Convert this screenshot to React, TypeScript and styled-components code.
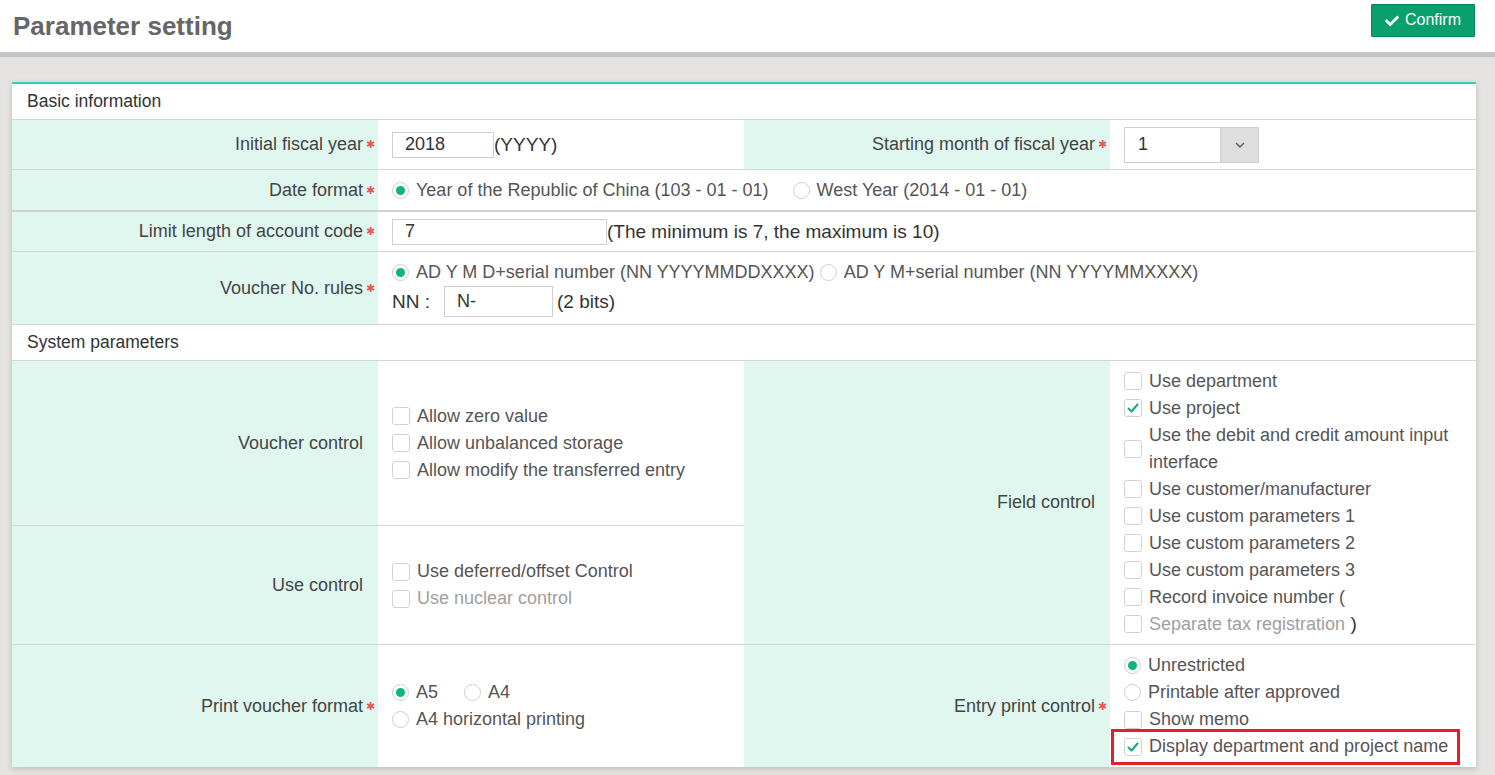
import React from 'react';
import styled, { createGlobalStyle, css } from 'styled-components';
import { FaCheck } from 'react-icons/fa';

const GlobalStyle = createGlobalStyle`
  html, body { margin: 0; padding: 0; background: #e4e3e2; }
  body {
    font-family: "Liberation Sans", Arial, sans-serif;
    width: 1495px; height: 775px; overflow: hidden;
  }
  * { box-sizing: border-box; }
`;

const Page = styled.div`
  display: flex;
  flex-direction: column;
  height: 775px;
`;

const Header = styled.header`
  height: 57px;
  background: #fff;
  border-bottom: 5px solid #c4c4c4;
  display: flex;
  align-items: flex-start;
  justify-content: space-between;
  padding: 0 20px 0 13px;
`;

const Title = styled.h1`
  margin: 0;
  font-size: 26px;
  line-height: 52px;
  font-weight: bold;
  color: #666;
`;

const ConfirmButton = styled.button`
  margin-top: 4px;
  height: 33px;
  width: 104px;
  background: #0aa06e;
  border: 1px solid #07845a;
  border-radius: 1px;
  color: #fff;
  font-family: "Liberation Sans", Arial, sans-serif;
  font-size: 16px;
  display: flex;
  align-items: center;
  justify-content: center;
  gap: 6px;
  padding: 0 10px 2px 10px;
  svg { margin-top: 2px; }
`;

const Main = styled.main`
  padding: 25px 19px 0 12px;
`;

const Card = styled.section`
  width: 1464px;
  background: #fff;
  border-top: 2px solid #33d1bd;
  box-shadow: 0 2px 6px rgba(0, 0, 0, 0.16);
  display: grid;
  grid-template-columns: repeat(4, 366px);
  font-size: 18px;
`;

const SectionHead = styled.div`
  grid-column: 1 / -1;
  height: 36px;
  padding-left: 15px;
  display: flex;
  align-items: center;
  color: #333;
  font-size: 17.5px;
  border-bottom: 1px solid #d6d6d6;
`;

const cellBorder = css<{ $h: number; $thick?: boolean; $last?: boolean }>`
  height: ${(p) => p.$h}px;
  border-bottom: ${(p) => (p.$last ? 'none' : p.$thick ? '2px solid #d0d0d0' : '1px solid #d6d6d6')};
`;

const Label = styled.div<{ $h: number; $thick?: boolean; $last?: boolean; $rowSpan?: number }>`
  ${cellBorder};
  ${(p) => (p.$rowSpan ? `grid-row: span ${p.$rowSpan};` : '')}
  background: #e0f7ef;
  display: flex;
  justify-content: flex-end;
  align-items: center;
  padding-right: 1px;
  color: #444;
`;

const Star = styled.span<{ $show: boolean }>`
  width: 14px;
  text-align: center;
  color: #e5585c;
  font-size: 11px;
  visibility: ${(p) => (p.$show ? 'visible' : 'hidden')};
`;

const Value = styled.div<{ $h: number; $thick?: boolean; $last?: boolean; $span?: number; $rowSpan?: number }>`
  ${cellBorder};
  ${(p) => (p.$span ? `grid-column: span ${p.$span};` : '')}
  ${(p) => (p.$rowSpan ? `grid-row: span ${p.$rowSpan};` : '')}
  background: #fff;
  padding-left: 14px;
  display: flex;
  flex-direction: column;
  justify-content: center;
  color: #555;
`;

const Line = styled.div<{ $gap?: number }>`
  display: flex;
  align-items: center;
  min-height: 27px;
  gap: ${(p) => p.$gap ?? 0}px;
  color: #444;
`;

const TextInput = styled.div<{ $w: number; $hh: number }>`
  width: ${(p) => p.$w}px;
  height: ${(p) => p.$hh}px;
  border: 1px solid #cfcfcf;
  padding-left: 12px;
  display: flex;
  align-items: center;
  color: #333;
  background: #fff;
`;

const Select = styled.div`
  width: 135px;
  height: 36px;
  border: 1px solid #cfcfcf;
  display: flex;
  color: #333;
`;

const SelectText = styled.div`
  flex: 1;
  padding-left: 13px;
  display: flex;
  align-items: center;
`;

const SelectArrow = styled.div`
  width: 38px;
  background: #dedede;
  border-left: 1px solid #cfcfcf;
  display: flex;
  align-items: center;
  justify-content: center;
`;

const Option = styled.label<{ $disabled?: boolean }>`
  display: flex;
  align-items: center;
  gap: 7px;
  min-height: 27px;
  color: ${(p) => (p.$disabled ? '#a0a0a0' : '#555')};
`;

const RadioCircle = styled.span<{ $on?: boolean }>`
  flex: none;
  width: 17px;
  height: 17px;
  border-radius: 50%;
  border: 1px solid #cfcfcf;
  background: #fff;
  display: flex;
  align-items: center;
  justify-content: center;
  &::after {
    content: '';
    width: 9px;
    height: 9px;
    border-radius: 50%;
    background: ${(p) => (p.$on ? '#11b37f' : 'transparent')};
  }
`;

const Box = styled.span`
  flex: none;
  width: 18px;
  height: 18px;
  border-radius: 3px;
  border: 1px solid #d2d2d2;
  background: #fff;
  display: flex;
  align-items: center;
  justify-content: center;
`;

const OptionText = styled.span`
  line-height: 27px;
`;

const Highlight = styled.div`
  position: relative;
  &::after {
    content: '';
    position: absolute;
    top: -4px;
    bottom: -5px;
    left: -13px;
    right: 16px;
    border: 3px solid #e61e28;
    pointer-events: none;
  }
`;

const Check = () => (
  <svg width="14" height="14" viewBox="0 0 14 14">
    <path d="M2.5 7.5 L5.5 10.5 L11.5 3.5" fill="none" stroke="#13ad7a" strokeWidth="2" strokeLinecap="round" strokeLinejoin="round" />
  </svg>
);

const Radio = ({ on, children }: { on?: boolean; children: React.ReactNode }) => (
  <Option>
    <RadioCircle $on={on} />
    <OptionText>{children}</OptionText>
  </Option>
);

const CheckItem = ({ on, disabled, children }: { on?: boolean; disabled?: boolean; children: React.ReactNode }) => (
  <Option $disabled={disabled}>
    <Box>{on && <Check />}</Box>
    <OptionText>{children}</OptionText>
  </Option>
);

const FieldLabel = ({ text, req, ...rest }: { text: string; req?: boolean; $h: number; $thick?: boolean; $last?: boolean; $rowSpan?: number }) => (
  <Label {...rest}>
    <span>{text}</span>
    <Star $show={!!req}>✱</Star>
  </Label>
);

const ParenDark = styled.span<{ $w?: number; $ml?: number }>`
  color: #333;
  font-size: 19px;
  ${(p) => (p.$w ? `width: ${p.$w}px;` : '')}
  ${(p) => (p.$ml ? `margin-left: ${p.$ml}px;` : '')}
`;

export default function App() {
  return (
    <Page>
      <GlobalStyle />
      <Header>
        <Title>Parameter setting</Title>
        <ConfirmButton>
          <FaCheck size={14} />
          Confirm
        </ConfirmButton>
      </Header>
      <Main>
        <Card>
          <SectionHead>Basic information</SectionHead>

          <FieldLabel text="Initial fiscal year" req $h={50} />
          <Value $h={50}>
            <Line>
              <TextInput $w={102} $hh={26}>2018</TextInput>
              <ParenDark>(YYYY)</ParenDark>
            </Line>
          </Value>
          <FieldLabel text="Starting month of fiscal year" req $h={50} />
          <Value $h={50}>
            <Select>
              <SelectText>1</SelectText>
              <SelectArrow>
                <svg width="12" height="8" viewBox="0 0 12 8">
                  <path d="M2 2 L6 6 L10 2" fill="none" stroke="#555" strokeWidth="1.4" />
                </svg>
              </SelectArrow>
            </Select>
          </Value>

          <FieldLabel text="Date format" req $h={42} $thick />
          <Value $h={42} $thick $span={3}>
            <Line $gap={24}>
              <Radio on>Year of the Republic of China (103 - 01 - 01)</Radio>
              <Radio>West Year (2014 - 01 - 01)</Radio>
            </Line>
          </Value>

          <FieldLabel text="Limit length of account code" req $h={40} />
          <Value $h={40} $span={3}>
            <Line>
              <TextInput $w={215} $hh={26}>7</TextInput>
              <ParenDark>(The minimum is 7, the maximum is 10)</ParenDark>
            </Line>
          </Value>

          <FieldLabel text="Voucher No. rules" req $h={73} />
          <Value $h={73} $span={3}>
            <Line $gap={5}>
              <Radio on>AD Y M D+serial number (NN YYYYMMDDXXXX)</Radio>
              <Radio>AD Y M+serial number (NN YYYYMMXXXX)</Radio>
            </Line>
            <Line>
              <ParenDark $w={52}>NN :</ParenDark>
              <TextInput $w={109} $hh={31}>N-</TextInput>
              <ParenDark $ml={4}>(2 bits)</ParenDark>
            </Line>
          </Value>

          <SectionHead>System parameters</SectionHead>

          <FieldLabel text="Voucher control" $h={165} />
          <Value $h={165}>
            <CheckItem>Allow zero value</CheckItem>
            <CheckItem>Allow unbalanced storage</CheckItem>
            <CheckItem>Allow modify the transferred entry</CheckItem>
          </Value>
          <FieldLabel text="Field control" $h={284} $rowSpan={2} />
          <Value $h={284} $rowSpan={2}>
            <CheckItem>Use department</CheckItem>
            <CheckItem on>Use project</CheckItem>
            <CheckItem>Use the debit and credit amount input interface</CheckItem>
            <CheckItem>Use customer/manufacturer</CheckItem>
            <CheckItem>Use custom parameters 1</CheckItem>
            <CheckItem>Use custom parameters 2</CheckItem>
            <CheckItem>Use custom parameters 3</CheckItem>
            <CheckItem>Record invoice number (</CheckItem>
            <Line $gap={0}>
              <CheckItem disabled>Separate tax registration</CheckItem>
              <ParenDark>&nbsp;)</ParenDark>
            </Line>
          </Value>

          <FieldLabel text="Use control" $h={119} />
          <Value $h={119}>
            <CheckItem>Use deferred/offset Control</CheckItem>
            <CheckItem disabled>Use nuclear control</CheckItem>
          </Value>

          <FieldLabel text="Print voucher format" req $h={122} $last />
          <Value $h={122} $last>
            <Line $gap={26}>
              <Radio on>A5</Radio>
              <Radio>A4</Radio>
            </Line>
            <Radio>A4 horizontal printing</Radio>
          </Value>
          <FieldLabel text="Entry print control" req $h={122} $last />
          <Value $h={122} $last>
            <Radio on>Unrestricted</Radio>
            <Radio>Printable after approved</Radio>
            <CheckItem>Show memo</CheckItem>
            <Highlight>
              <CheckItem on>Display department and project name</CheckItem>
            </Highlight>
          </Value>
        </Card>
      </Main>
    </Page>
  );
}
